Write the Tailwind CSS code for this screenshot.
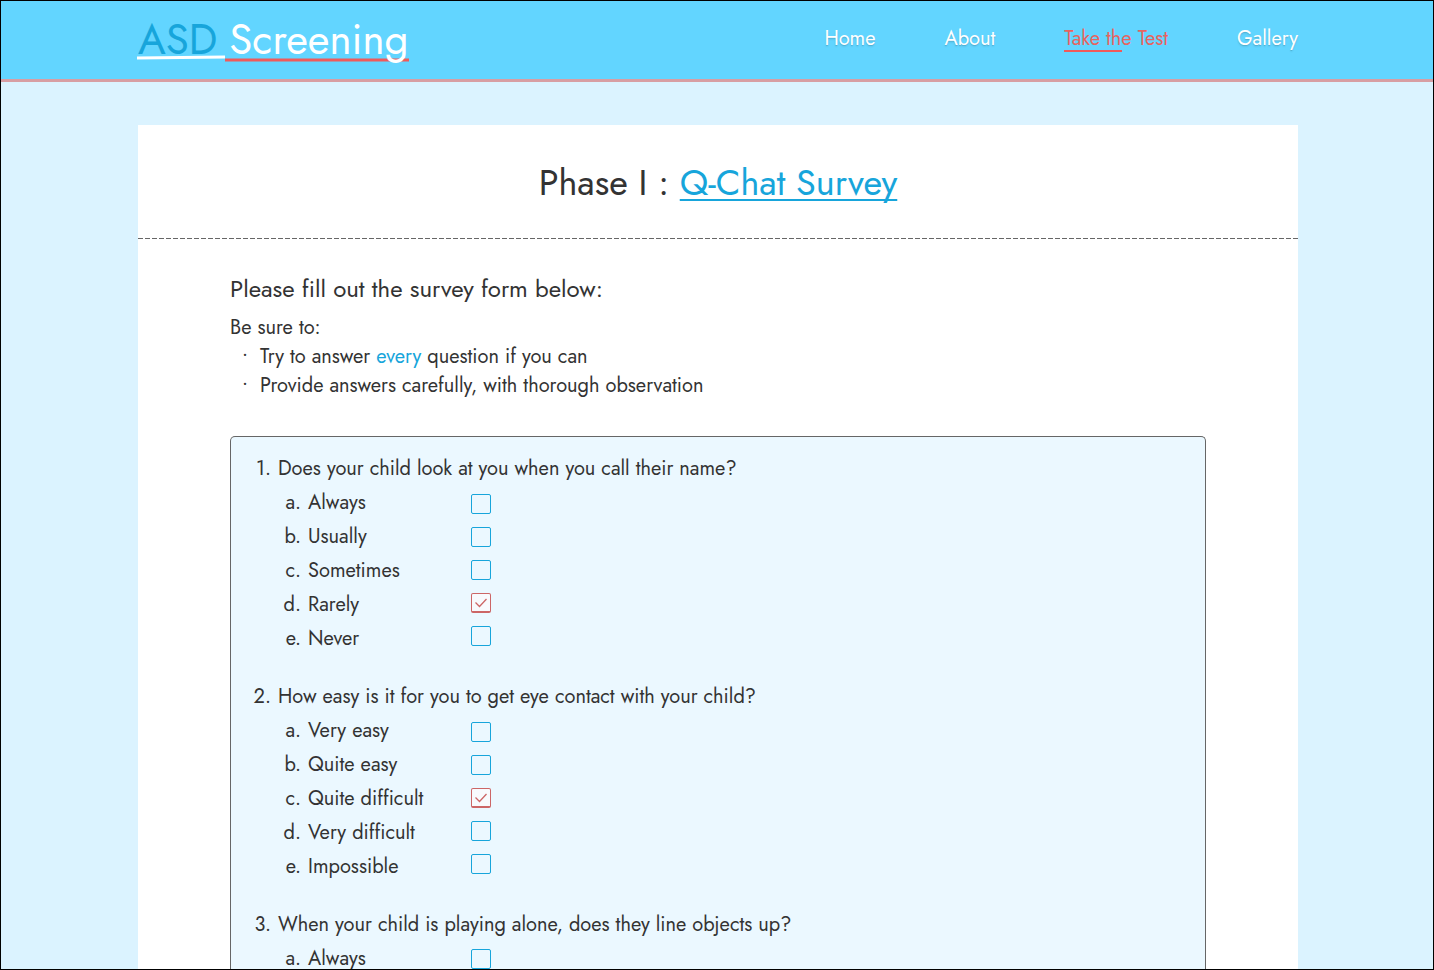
<!DOCTYPE html>
<html lang="en">
<head>
<meta charset="utf-8">
<meta name="viewport" content="width=device-width, initial-scale=1">
<title>ASD Screening – Q-Chat Survey</title>
<script src="https://cdn.jsdelivr.net/npm/@tailwindcss/browser@4"></script>
<style>
  .answer { appearance: none; width: 20px; height: 20px; border: 1px solid #17a5db; border-radius: 2px; display: block; }
  .answer:checked {
    border-color: #cc6666; border-bottom-width: 2px; background: #f8fafd;
    background-image: url("data:image/svg+xml,%3Csvg xmlns='http://www.w3.org/2000/svg' viewBox='0 0 18 17'%3E%3Cpath d='M3.5 8.5 7.5 12.5 14.5 5' fill='none' stroke='%23cc6666' stroke-width='1.3'/%3E%3C/svg%3E");
  }
</style>
</head>
<body class="flex h-screen flex-col overflow-hidden border border-black bg-[#dbf3ff] font-['Jost','Lato',sans-serif] text-xl text-[#333333]">

<header class="shrink-0 border-b-3 border-[#d79ea3] bg-[#62d5ff] pl-0.5">
  <div class="mx-auto flex h-[78px] max-w-[1160px] items-center justify-between">
    <a href="#" class="relative isolate flex items-center gap-3 text-[42px] leading-[78px] text-white">
      <span class="text-[#17a5db]">ASD</span>
      <span>Screening</span>
      <svg class="absolute top-[53px] -left-px -z-10 h-2 w-[272px]" viewBox="0 0 272 8" fill="none" aria-hidden="true">
        <path d="M0 4 88 3" stroke="#fff" stroke-width="3"/>
        <path d="M88 6H272" stroke="#f05a5a" stroke-width="3"/>
      </svg>
    </a>
    <nav class="flex gap-[69px] pb-0.5 leading-[26px] text-white">
      <a href="#" class="text-shadow-sm">Home</a>
      <a href="#" class="text-shadow-sm">About</a>
      <a href="#" aria-current="page" class="relative text-[#e8635f]">Take the Test<span class="absolute bottom-0 left-0 h-0.5 w-[58px] bg-[#f05a5a]"></span></a>
      <a href="#" class="text-shadow-sm">Gallery</a>
    </nav>
  </div>
</header>

<main class="min-h-0 flex-1 overflow-y-auto pt-[43px] pl-0.5 [scrollbar-width:none]">
  <div class="mx-auto max-w-[1160px] bg-white">
    <h1 class="pt-[33px] pb-[31px] text-center text-4xl leading-[49px]">Phase I : <a href="#" class="text-[#17a5db] underline decoration-2 underline-offset-4 [text-decoration-skip-ink:none]">Q-Chat Survey</a></h1>
    <svg class="block h-px w-full" aria-hidden="true"><line x1="0" y1="0.5" x2="100%" y2="0.5" stroke="#666" stroke-dasharray="5 2"/></svg>

    <div class="px-[92px] pt-8">
      <h2 class="text-2xl leading-[36px]">Please fill out the survey form below:</h2>
      <p class="pt-1.5 leading-[29px]">Be sure to:</p>
      <ul class="leading-[29px]">
        <li class="flex"><span class="w-[30px] text-center leading-6">·</span><span>Try to answer <em class="text-[#17a5db] not-italic">every</em> question if you can</span></li>
        <li class="flex"><span class="w-[30px] text-center leading-6">·</span><span>Provide answers carefully, with thorough observation</span></li>
      </ul>

      <form class="mt-9 flex flex-col gap-6 rounded-t-[5px] border border-b-0 border-[#666666] bg-[#ebf8ff] px-4 pt-[15px] leading-[34px]">
        <fieldset>
          <legend class="flex gap-[7px]"><span class="w-6 text-right">1.</span>Does your child look at you when you call their name?</legend>
          <div class="flex pl-[31px]">
            <div class="flex w-[193px] flex-col">
              <label for="q1a" class="flex gap-[7px]"><span class="w-[23px] text-right">a.</span>Always</label>
              <label for="q1b" class="flex gap-[7px]"><span class="w-[23px] text-right">b.</span>Usually</label>
              <label for="q1c" class="flex gap-[7px]"><span class="w-[23px] text-right">c.</span>Sometimes</label>
              <label for="q1d" class="flex gap-[7px]"><span class="w-[23px] text-right">d.</span>Rarely</label>
              <label for="q1e" class="flex gap-[7px]"><span class="w-[23px] text-right">e.</span>Never</label>
            </div>
            <div class="flex flex-col gap-[13px] pt-2">
              <input class="answer" type="checkbox" id="q1a">
              <input class="answer" type="checkbox" id="q1b">
              <input class="answer" type="checkbox" id="q1c">
              <input class="answer" type="checkbox" id="q1d" checked>
              <input class="answer" type="checkbox" id="q1e">
            </div>
          </div>
        </fieldset>
        <fieldset>
          <legend class="flex gap-[7px]"><span class="w-6 text-right">2.</span>How easy is it for you to get eye contact with your child?</legend>
          <div class="flex pl-[31px]">
            <div class="flex w-[193px] flex-col">
              <label for="q2a" class="flex gap-[7px]"><span class="w-[23px] text-right">a.</span>Very easy</label>
              <label for="q2b" class="flex gap-[7px]"><span class="w-[23px] text-right">b.</span>Quite easy</label>
              <label for="q2c" class="flex gap-[7px]"><span class="w-[23px] text-right">c.</span>Quite difficult</label>
              <label for="q2d" class="flex gap-[7px]"><span class="w-[23px] text-right">d.</span>Very difficult</label>
              <label for="q2e" class="flex gap-[7px]"><span class="w-[23px] text-right">e.</span>Impossible</label>
            </div>
            <div class="flex flex-col gap-[13px] pt-2">
              <input class="answer" type="checkbox" id="q2a">
              <input class="answer" type="checkbox" id="q2b">
              <input class="answer" type="checkbox" id="q2c" checked>
              <input class="answer" type="checkbox" id="q2d">
              <input class="answer" type="checkbox" id="q2e">
            </div>
          </div>
        </fieldset>
        <fieldset>
          <legend class="flex gap-[7px]"><span class="w-6 text-right">3.</span>When your child is playing alone, does they line objects up?</legend>
          <div class="flex pl-[31px]">
            <div class="flex w-[193px] flex-col">
              <label for="q3a" class="flex gap-[7px]"><span class="w-[23px] text-right">a.</span>Always</label>
            </div>
            <div class="flex flex-col pt-[7px]">
              <input class="answer" type="checkbox" id="q3a">
            </div>
          </div>
        </fieldset>
      </form>
    </div>
  </div>
</main>
</body>
</html>
